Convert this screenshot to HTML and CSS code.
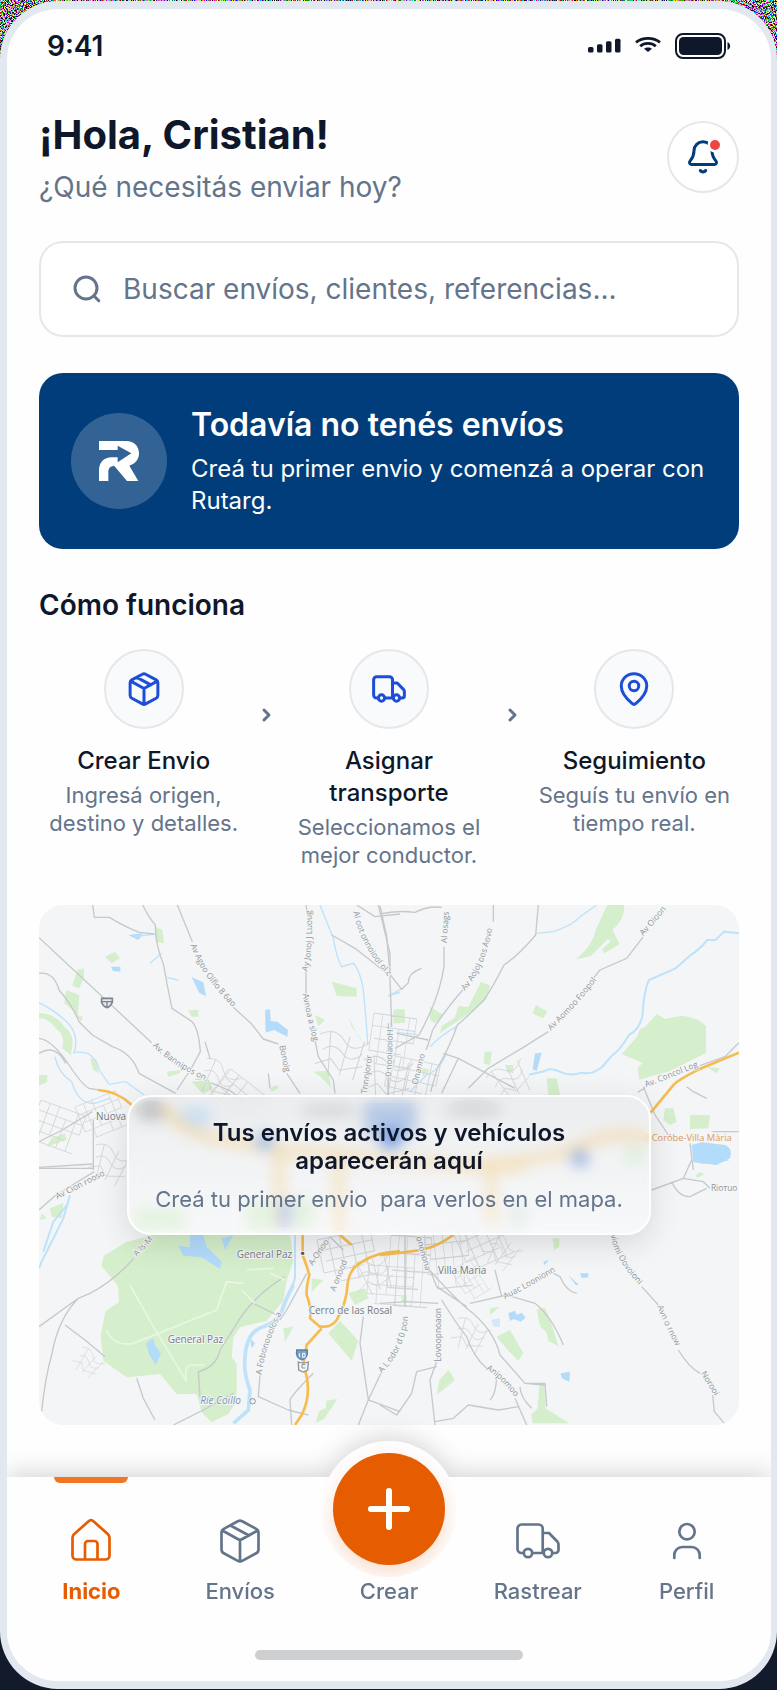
FILE: index.html
```html
<!DOCTYPE html>
<html lang="es">
<head>
<meta charset="utf-8">
<meta name="viewport" content="width=device-width, initial-scale=1">
<title>Rutarg</title>
<link rel="stylesheet" href="styles.css">
</head>
<body>
<svg class="grain" aria-hidden="true">
  <defs>
    <filter id="noise" x="0" y="0" width="100%" height="100%">
      <feTurbulence type="fractalNoise" baseFrequency="0.9" numOctaves="2" seed="4"/>
      <feColorMatrix values="5 1 1 0 -3.2  1 5 1 0 -3.2  1 1 5 0 -3.2  0 0 0 0 1"/>
    </filter>
  </defs>
  <rect width="100%" height="80" filter="url(#noise)"/>
</svg>
<svg class="defs" aria-hidden="true">
  <symbol id="i-box" viewBox="0 0 48 48">
    <path d="M21.8 4.3a4.4 4.4 0 0 1 4.4 0l14 7.6a4.4 4.4 0 0 1 2.3 3.9v16.6a4.4 4.4 0 0 1-2.3 3.9l-14 7.6a4.4 4.4 0 0 1-4.4 0l-14-7.6a4.4 4.4 0 0 1-2.3-3.9V15.8a4.4 4.4 0 0 1 2.3-3.9zM6.3 13.5 24 23.3l17.700-9.8M24 23.3v21M14.5 8.500l18.500 10"/>
  </symbol>
  <symbol id="i-truck" viewBox="0 0 48 48">
    <path d="M9.8 36H7.5a4 4 0 0 1-4-4V11.5a4 4 0 0 1 4-4h17.200a4 4 0 0 1 4 4V36M18.200 36h11.600M28.700 16H35l8.500 8.800a4 4 0 0 1 1 2.700V33a3 3 0 0 1-3 3h-3.300"/>
    <circle cx="14" cy="36" r="4.2"/><circle cx="34" cy="36" r="4.2"/>
  </symbol>
</svg>

<div class="phone">
  <header class="status">
    <span class="clock">9:41</span>
    <div class="status-icons">
      <svg width="33" height="26" viewBox="0 0 33 26" fill="currentColor" aria-label="Señal"><rect x="0" y="14" width="5.500" height="5.500" rx="1.500"/><rect x="9" y="11.300" width="5.500" height="8.200" rx="1.500"/><rect x="18" y="8.300" width="5.500" height="11.200" rx="1.500"/><rect x="27" y="5.700" width="5.500" height="13.800" rx="1.500"/></svg>
      <svg width="26" height="26" viewBox="0 0 26 26" fill="none" stroke="currentColor" stroke-width="2.800" aria-label="Wi-Fi"><path d="M1 9.300C7.500 4 18.500 4 25 9.300M5.200 13.200c4.300-3.700 11.300-3.700 15.600 0"/><path d="M9 15.800c2.300-1.800 5.700-1.800 8 0l-4 3.200z" fill="currentColor" stroke="none"/></svg>
      <svg width="56" height="26" viewBox="0 0 56 26" aria-label="Batería"><rect x="1" y="1" width="49" height="24" rx="7" fill="none" stroke="currentColor" stroke-width="2"/><rect x="4" y="4" width="43" height="18" rx="4.500" fill="currentColor"/><path d="M52.500 9c3.500 1.500 3.500 6.500 0 8z" fill="currentColor"/></svg>
    </div>
  </header>

  <main class="content">
    <section class="greeting">
      <div>
        <h1>¡Hola, Cristian!</h1>
        <p class="lead">¿Qué necesitás enviar hoy?</p>
      </div>
      <button class="bell" type="button" aria-label="Notificaciones">
        <svg width="40" height="40" viewBox="0 0 40 40" fill="none" stroke="currentColor" stroke-width="3" stroke-linecap="round" stroke-linejoin="round"><path d="M20 4.700c-5 0-9 4-9 9 0 5-1.500 7.300-4 10.500-1 1.300-.4 3.300 1.300 3.300h23.400c1.700 0 2.300-2 1.300-3.300-2.500-3.200-4-5.500-4-10.500 0-5-4-9-9-9zM17.300 33.500c1.400 1.900 4 1.900 5.400 0"/><circle cx="32" cy="8" r="7.500" fill="#fff" stroke="none"/><circle cx="32" cy="8" r="5" fill="#ef4444" stroke="none"/></svg>
      </button>
    </section>

    <label class="search">
      <svg width="32" height="32" viewBox="0 0 32 32" fill="none" stroke="currentColor" stroke-width="3" stroke-linecap="round"><circle cx="15" cy="15" r="11"/><path d="m23 23 4.800 4.800"/></svg>
      <input type="search" aria-label="Buscar" placeholder="Buscar envíos, clientes, referencias...">
    </label>

    <section class="banner">
      <span class="logo"><svg width="40" height="40" viewBox="0 0 120 120" fill="#fff"><path d="M0 0h82c23 0 38 16 38 37 0 18-11 31-29 37l27 46H84L46 75c-11 0-18 6-18 18v27H0V88c0-23 15-39 38-39h18v15l41-27-41-23v13H0z"/></svg></span>
      <div>
        <h2>Todavía no tenés envíos</h2>
        <p>Creá tu primer envio y comenzá a operar con Rutarg.</p>
      </div>
    </section>

    <h2 class="section-title">Cómo funciona</h2>
    <div class="steps">
      <article class="step">
        <span class="step-icon"><svg width="36" height="36"><use href="#i-box"/></svg></span>
        <h3>Crear Envio</h3>
        <p>Ingresá origen, destino y detalles.</p>
      </article>
      <svg class="chevron" width="20" height="20" viewBox="0 0 20 20"><path d="m8 5 5 5-5 5"/></svg>
      <article class="step">
        <span class="step-icon"><svg width="36" height="36"><use href="#i-truck"/></svg></span>
        <h3>Asignar transporte</h3>
        <p>Seleccionamos el mejor conductor.</p>
      </article>
      <svg class="chevron" width="20" height="20" viewBox="0 0 20 20"><path d="m8 5 5 5-5 5"/></svg>
      <article class="step">
        <span class="step-icon"><svg width="36" height="36" viewBox="0 0 48 48"><path d="M24 3.500c-9.500 0-17 7.300-17 16.500 0 9 7.500 17.500 14.300 23.300a4.200 4.200 0 0 0 5.400 0C33.500 37.500 41 29 41 20 41 10.800 33.500 3.500 24 3.500z"/><circle cx="24" cy="20" r="6.300"/></svg></span>
        <h3>Seguimiento</h3>
        <p>Seguís tu envío en tiempo real.</p>
      </article>
    </div>

    <section class="map">
      <svg class="map-art" viewBox="0 0 700 520" preserveAspectRatio="xMidYMid slice" aria-hidden="true">
        <defs>
          <g id="grid"><path d="M0 0h120M0 25h120M10 50h110M0 75h90M20 100h100M0 0v75M25 0v100M50 0v75M75 25v75M100 0v100M120 0v50"/></g>
          <g id="lanes"><path d="M0 10q30-20 50 5t50-5M10 40q20-20 40 0t40-5M0 70l30-15 20 20 45-15M20 0l10 90M60 5l-8 80M90 10 80 90"/></g>
          <path id="t1" d="M512 165Q545 265 660 372"/>
          <path id="t2" d="M398 468Q470 540 600 590"/>
          <path id="t3" d="M862 245Q884 160 872 50"/>
          <path id="t4" d="M1000 65Q1020 170 1110 265"/>
          <path id="t5" d="M848 312Q855 360 884 470"/>
          <path id="t6" d="M255 303Q325 220 340 90"/>
          <path id="t7" d="M512 422Q590 350 665 250"/>
          <path id="t8" d="M798 592 980 520"/>
          <path id="t9" d="M790 138 870 45"/>
          <path id="t10" d="M692 225Q705 310 810 408"/>
          <path id="t11" d="M832 440Q855 500 905 590"/>
          <path id="t12" d="M318 628Q370 660 420 730"/>
          <path id="t13" d="M725 645Q735 560 785 460"/>
          <path id="t14" d="M375 418Q450 380 540 325"/>
          <path id="t15" d="M5 640Q75 570 84 470"/>
        </defs>
        <rect width="700" height="520" fill="#f3f5f6"/>

        <!-- parks -->
        <g class="park">
          <g transform="translate(-19 -15) scale(.33333)">
            <path d="M405 110l22 10 5 40-25-5zM255 200l30-15 15 20-25 15zM172 240l20-5v30l-15 30-20-8zM138 300l40 15-5 60 15 5-5 15-25-35-25-20zM57 370q50 0 75 40 30 20 25 60l-5 25-25-20q10-40-20-60-20-30-50-30zM57 555h25v20l-25 12zM515 575l50-5 15 25-30 17zM935 275l75 20v25l-60-2zM885 375l30 15-20 18zM1120 360h20v40h-20zM985 380l30 60 25 30-45-60zM440 545l40-5v10l-35 10zM880 545l45-3 8 50-30-30zM750 595l20-10 5 10-20 10zM95 745l40-15 5 20-60 20zM505 360l30 0 0 20-20 0zM210 505l20 5 5 40-15-10z"/>
          </g>
          <g transform="translate(341 -15) scale(.33333)">
            <path d="M682 45h50q5 40-35 75l22 42-45 28-8-12 27-25-10-5-50 50-45 10q50-40 60-90zM830 372l25 15 50-10q50 5 73 32v80l-110 55-90 25-5-35 15-15-63-27 45-50 10-25 15-5zM303 275l27 12-10 40-55 45-60 40-25 18 5-22 40-25 10-35 30 3zM468 345l35 20-15 20-30-15zM45 358h30v40h-30zM150 350l40 25-25 25-15-10zM500 565h30l10 50h-35zM315 485l20 0-5 40-20-5zM380 525l20 0 0 25-20-3zM855 655h25l10 40-20 10-20-15zM930 675l60 0-5 40-55 2zM980 530l40 5-10 15zM120 530l30 10-20 20z"/>
          </g>
          <g transform="translate(-19 255) scale(.33333)">
            <path d="M410 222h400l10 80-20 60-10 60-50 60-80 20-20 30-5 60 15 20v110l-25 40-50 25-30-30-15-55-60 0-50-60-100 10-70-50-8-75 15-75 40-25-3-50-50-60 8-30 65-40zM65 160l15 15-20 5zM90 145l40-15-5 45-30-5zM875 355l35 5-35 35zM985 400l50-15 10 30-40 20zM960 482l55 60-20 60-70-82zM790 505l30-5-25 45zM920 722l32-5-40 60-25 12 10-35 20-10z"/>
          </g>
          <g transform="translate(341 255) scale(.33333)">
            <path d="M518 235h20v25l-15 10zM470 448l25-5 20 50 20 65-30-15-5-25-20-20zM350 530l40-20 40 70-15 22-30-30-30-35zM205 630l20 30-55 45 8-45zM478 675l15 0 3 70 72 45h-110l-5-25 20-20zM960 35l12 8-20 12-5-8zM330 445l30-5-30 25zM65 405h15v20h-15z"/>
          </g>
        </g>

        <!-- water -->
        <g class="water">
          <g transform="translate(-19 -15) scale(.33333)">
            <path d="M273 230h28v15l-22-2zM515 262l35 15 8 42-20-10zM735 360l15-2 2 35 20 2 32 25-2 20-40-20-25 8zM325 135l45-5-15 20z"/>
            <g class="line"><path d="M57 338q60 30 95 70 25 40 10 80 60-10 75 50l30 45 50-8 55 40M105 500q10 50 50 75 20 70 70 65l45-15M390 220l35-30M345 140l60-8M440 262l35 8M900 45l40 100q10 60 25 85l35-10q20 20 30 80 10 100 13 165M1105 318l35-12"/></g>
          </g>
          <g transform="translate(341 -15) scale(.33333)">
            <path d="M465 490l20-2-15 55-12-5zM935 765l30-8 70 8q25 10 15 40l-40 20-70-8z"/>
            <g class="line wide"><path d="M1077 130l-45-5-25 25h-25q-25 30-50 45l-45 40-80 35q-15 30-20 110-10 40-40 55-30 50-50 60l-30 35q-30 25-60 18-40 12-65-2-30-15-50-2l-45 10"/></g>
            <g class="line"><path d="M470 130l50-5q60-20 80-45l50-35M50 428l60 5M200 490q-20 50-60 65l-50 50M25 318l40-22M230 410q-40 20-80 60"/></g>
          </g>
          <g transform="translate(-19 255) scale(.33333)">
            <path d="M510 225h40l10 35 45 45-5 22-55-35-55-5-15-30 35 5zM605 235l35-10-25 45zM378 550l20-15 10 25 15 20-15 35-20-30zM690 535l15 15-10 15z"/>
            <g class="line river"><path d="M820 375q-25 45-40 95-20 20-50 30-50 15-55 90-5 50 15 100l-5 60-45 40"/></g>
            <g class="line wide"><path d="M825 225v130l-10 30M150 105l-20 70-30 60-35 70-8 20M145 130l-45 55-30 90"/></g>
          </g>
          <g transform="translate(341 255) scale(.33333)">
            <path d="M940 0h110l-40 8-45 3zM565 345l32 30-10 0zM600 340h25v12l-20 2zM542 640l28-5-2 30-22-10zM385 460l20-8 5 12 15-6 12 15-15 12-20-8-12 6zM490 305l18-5-15 15z"/>
            <path d="M335 480l25-5 0 25-20 0z" opacity=".5"/>
          </g>
        </g>

        <!-- small streets -->
        <g class="street">
          <use href="#grid" transform="translate(2 195) rotate(20) scale(.4)"/>
          <use href="#grid" transform="translate(36 202) rotate(-22) scale(.36)"/>
          <use href="#lanes" transform="translate(58 236) rotate(20) scale(.4)"/>
          <use href="#grid" transform="translate(192 164) rotate(38) scale(.42)"/>
          <use href="#lanes" transform="translate(170 150) rotate(30) scale(.4)"/>
          <use href="#lanes" transform="translate(282 124) rotate(10) scale(.5)"/>
          <use href="#grid" transform="translate(335 108) rotate(8) scale(.36 .5)"/>
          <use href="#grid" transform="translate(352 150) rotate(12) scale(.42)"/>
          <use href="#lanes" transform="translate(325 150) rotate(4) scale(.5)"/>
          <use href="#lanes" transform="translate(445 170) rotate(-30) scale(.4)"/>
          <use href="#grid" transform="translate(278 335) rotate(-12) scale(.45)"/>
          <use href="#grid" transform="translate(352 330) rotate(4) scale(.34 .7)"/>
          <use href="#grid" transform="translate(385 325) rotate(-6) scale(.35 .6)"/>
          <use href="#grid" transform="translate(330 360) rotate(4) scale(.38)"/>
          <use href="#grid" transform="translate(415 330) rotate(-24) scale(.4)"/>
          <use href="#grid" transform="translate(412 366) rotate(-32) scale(.22 .36)"/>
          <use href="#lanes" transform="translate(455 325) rotate(30) scale(.35)"/>
          <use href="#lanes" transform="translate(420 410) rotate(20) scale(.35)"/>
          <use href="#lanes" transform="translate(45 440) rotate(36) scale(.28)"/>
          <use href="#lanes" transform="translate(310 360) rotate(-20) scale(.4)"/>
        </g>

        <!-- roads -->
        <g class="road">
          <g transform="translate(-19 -15) scale(.33333)"><path d="M57 143 395 458M572 578l60 25 40 30M57 250q45-5 60 50 40 45 60 95l40 40 60 35q60 20 80 80l110 60M57 445q40 5 90 80 40 60 60 70l30 5M57 490q50-30 80 30M218 45l5 37 45 0q50 30 90 45l45 5M368 45q20 40 38 60 0 60 25 120 10 60 25 130l60 40q20 20 25 90l-30 55-40 60M472 45l45 110M640 352l55 50 35 45 45 15M800 550l40 60M858 45l5 30M858 240v70M885 450l10 50 45 70 5 40M1010 45l55 35 75-8M1075 45l35 145v75M935 135l70 40 95 75M1110 265l5 145M1105 570v50M555 455l15 50M57 755l70-35 90-55M220 690v150M57 832l160-10M745 550l5 45"/></g>
          <g transform="translate(341 -15) scale(.33333)"><path d="M0 72q50-12 105-5 40-20 80-15M0 48l20 90 10 115 35 45 20-20q0-30 40-43M192 170v60q-10 60-30 110-20 50-45 95L45 475M340 45v50M248 300q-60 70-90 120-15 50-20 60M475 45l-8 90q-50 60-95 90-30 60-60 105-50 50-80 75-20 60-60 130l-20 70M790 140l-50 65-80 35-28 35M505 425l-80 50-100 60-60 60M960 527l75-27 42-42M798 592l-25 15M790 590l35 85 40 60M190 490l45 15 170 90M235 505l-50 105M25 400v220M50 430l95 20M920 590l20 15 40 20M1077 725l-80 0M930 760l10 80"/></g>
          <g transform="translate(-19 255) scale(.33333)"><path d="M57 25h165M108 105l115-70M342 295Q260 385 175 415L57 500M175 415q-60 60-80 170-20 70-30 170M108 105l-51 45M135 495l60 45 60 50M795 350q-100 60-150 150l-45 70q-10 50-65 65l5 75M640 700l-90 50-90 45M860 340l-60 110-20 30M720 645l-5 65 90 40 60 15M1030 470l-10 80 25 170-30 75M1085 635l-40 85 95 35M350 655l20 60 35 65M880 640q-60 60-70 80l5 75M930 230l40 40M700 430l70 35"/></g>
          <g transform="translate(341 255) scale(.33333)"><path d="M140 320q60 70 120 125 80 60 100 140l75 85 60 5M150 330l20 50 90 60M185 420q50 80 75 110 20 60 60 95M405 715l35 80M175 590l-25 70 15 135M0 735l50 30 45-65 15-65 60-15M165 785l55-10 45-40 90 15 60-10M420 680q0 30 35 65M435 670l60 0 5 70M75 440v-210M0 430l80-5 95 5M270 430l110-25 85 25q50 40 85 125M345 330l20 80M510 335l30 15q20 45 50 50M785 380l50 55M895 570q30 50 65 70M998 705l5 50 30 35M815 90l95-35 60 10 20 20M910 55l25-55M875 65q20 45 55 45l50-25M350 640q0 60-20 80"/></g>
        </g>
        <g class="trail" transform="translate(-19 255) scale(.33333)"><path d="M330 375 400 500 500 665M260 510q20 50 80 40l250-100 30-85 50 5M680 330l80-5M665 390l40 40M500 665q-10-40 10-50l45 0M750 340l45 20"/></g>

        <!-- highways -->
        <g class="highway">
          <g transform="translate(-19 -15) scale(.33333)"><path d="M235 600q60 5 100 45"/></g>
          <g transform="translate(341 -15) scale(.33333)"><path d="M1077 488l-120 50q-60 30-75 45l-70 85"/></g>
          <g transform="translate(-19 255) scale(.33333)"><path d="M848 225v60q15 40 20 60-10 40-8 60 15 40 10 70l30 25h15q20 0 35-20 30-50 33-110 5-40 35-60 50-35 122-36M905 505l-45 50-10 60q30 80-5 150l-20 30M960 225l35 30"/></g>
          <g transform="translate(341 255) scale(.33333)"><path d="M0 285q110-10 140-20 30-5 80-40"/></g>
        </g>

        <!-- city centre, seen through the glass card -->
        <g>
          <ellipse cx="113" cy="206" rx="16" ry="10" fill="#a3a6a8"/>
          <rect x="140" y="202" width="32" height="20" rx="8" fill="#b5d8fa"/>
          <rect x="325" y="198" width="52" height="34" fill="#8fb0e2"/>
          <ellipse cx="435" cy="205" rx="30" ry="10" fill="#cfd1d3"/>
          <ellipse cx="290" cy="206" rx="30" ry="8" fill="#cfd1d3"/>
          <g class="boulevard"><path d="M126 200q10 26 54 34l66 12 80 6 90 8q70 0 120-16 40-22 74-10M240 244v78M300 246v80M452 258l0 60M425 262h60"/></g>
          <circle cx="352" cy="233" r="11" fill="#0b52e0"/>
          <circle cx="226" cy="236" r="9" fill="#5c92e0"/>
          <circle cx="541" cy="254" r="9" fill="#4f7fd6"/>
          <circle cx="595" cy="250" r="9" fill="#c9ecbb"/>
          <rect x="240" y="296" width="12" height="26" fill="#6f8dd0"/>
          <rect x="96" y="304" width="50" height="20" fill="#c6ebb8"/>
          <rect x="208" y="298" width="28" height="26" fill="#c6ebb8"/>
          <rect x="254" y="294" width="20" height="28" fill="#c6ebb8"/>
          <rect x="470" y="300" width="18" height="22" fill="#cfe3d2"/>
        </g>

        <!-- place and street names -->
        <g class="names">
          <g transform="translate(-19 -15) scale(.33333)">
            <text><textPath href="#t1">Av Agoo Olfio 8 6ao</textPath></text>
            <text><textPath href="#t2">Av. Bannipos on.</textPath></text>
            <text><textPath href="#t3">Ay Jonoj J Luoug</textPath></text>
            <text><textPath href="#t4">Al oot onnoiool ol c</textPath></text>
            <text><textPath href="#t5">Avnoa a slog</textPath></text>
            <text transform="translate(778 468) rotate(78)">Bonolg</text>
            <text transform="translate(1114 560) rotate(-88)">0 nooiaoioH</text>
            <text transform="translate(1040 612) rotate(-82)">Tnnnjoror</text>
            <text class="place" x="228" y="689">Nuova</text>
          </g>
          <g transform="translate(341 -15) scale(.33333)">
            <text transform="translate(200 160) rotate(-86)">Al osags</text>
            <text><textPath href="#t6">Av Aojoj oos Aovo</textPath></text>
            <text><textPath href="#t7">Av Aomoo Foopol</textPath></text>
            <text><textPath href="#t8">Av. Concol Log</textPath></text>
            <text><textPath href="#t9">Av Oioon</textPath></text>
            <text transform="translate(112 585) rotate(-76)">Onanno</text>
            <text class="toll" x="815" y="752">Coróbe-Villa Mària</text>
          </g>
          <g transform="translate(-19 255) scale(.33333)">
            <text transform="translate(112 118) rotate(-27)">Av Cion rooso</text>
            <text transform="translate(350 290) rotate(-46)">A ls-M</text>
            <text transform="translate(878 318) rotate(-56)">A-Onoo</text>
            <text transform="translate(945 395) rotate(-68)">A onood</text>
            <text><textPath href="#t13">A Fobonooolos a</textPath></text>
            <text class="place" x="650" y="294">General Paz</text>
            <text class="place" x="866" y="461">Cerro de las Rosal</text>
            <text class="place" x="443" y="550">General Paz</text>
            <text class="place stream" x="541" y="732">Ríe Coillo</text>
            <circle cx="848" cy="280" r="5" fill="#4b5563"/>
            <circle cx="698" cy="724" r="7" fill="#eef1f3" stroke="#7b828a" stroke-width="4"/>
          </g>
          <g transform="translate(341 255) scale(.33333)">
            <text transform="translate(108 232) rotate(74)">ononona</text>
            <text transform="translate(182 605) rotate(-90)">Lovoopnoaon</text>
            <text><textPath href="#t15">A L odor d 0 pon</textPath></text>
            <text><textPath href="#t10">viomi Oovoioni</textPath></text>
            <text><textPath href="#t11">Avn o rnow</textPath></text>
            <text><textPath href="#t12">Anipomoo</textPath></text>
            <text><textPath href="#t14">Auac Loonionn</textPath></text>
            <text transform="translate(962 640) rotate(58)">Norooi</text>
            <text x="993" y="93">Rioтuo</text>
            <text class="place" x="174" y="343">Villa Maria</text>
          </g>
        </g>

        <!-- route shields -->
        <g transform="translate(-19 -15) scale(.33333)"><path d="M245 325h32q3 20-16 28-20-8-16-28z" fill="#e5e8ea" stroke="#7d858e" stroke-width="5"/><path d="M245 335h32M261 335v16" stroke="#7d858e" stroke-width="4"/></g>
        <g transform="translate(-19 255) scale(.33333)"><path d="M830 570h32q3 22-16 30-20-8-16-30z" fill="#7ba0c4" stroke="#5b80a6" stroke-width="4"/><path d="M838 580v12M848 580v12h7v-12z" stroke="#fff" stroke-width="3" fill="none"/><path d="M835 606q15 6 30 0l-2 24-13 6-14-6z" fill="#f3f5f6" stroke="#8b939b" stroke-width="4"/><path d="M856 614h-10v10h10" stroke="#8b939b" stroke-width="3" fill="none"/></g>
      </svg>
      <div class="map-note">
        <h3>Tus envíos activos y vehículos aparecerán aquí</h3>
        <p>Creá tu primer envio&nbsp; para verlos en el mapa.</p>
      </div>
    </section>
  </main>

  <footer class="dock">
    <nav class="tabs" aria-label="Principal">
      <a class="tab active" href="#inicio" aria-current="page">
        <svg width="48" height="48" viewBox="0 0 48 48"><path d="M5.500 20.500c0-1.300.6-2.400 1.500-3.300L21.300 4.400a4 4 0 0 1 5.400 0L41 17.200c.9.900 1.500 2 1.500 3.300v18a4 4 0 0 1-4 4h-29a4 4 0 0 1-4-4zM18 42.500V27a3 3 0 0 1 3-3h6.500a3 3 0 0 1 3 3v15.500"/></svg>
        <span>Inicio</span>
      </a>
      <a class="tab" href="#envios">
        <svg width="48" height="48"><use href="#i-box"/></svg>
        <span>Envíos</span>
      </a>
      <a class="tab create" href="#crear">
        <i class="fab"><svg width="48" height="48" viewBox="0 0 48 48"><path d="M24 6v36M6 24h36"/></svg></i>
        <span>Crear</span>
      </a>
      <a class="tab" href="#rastrear">
        <svg width="48" height="48"><use href="#i-truck"/></svg>
        <span>Rastrear</span>
      </a>
      <a class="tab" href="#perfil">
        <svg width="48" height="48" viewBox="0 0 48 48"><circle cx="24" cy="14.700" r="7.700"/><path d="M11.300 41v-3a8 8 0 0 1 8-8h9.400a8 8 0 0 1 8 8v3"/></svg>
        <span>Perfil</span>
      </a>
    </nav>
    <div class="home-bar"></div>
  </footer>
</div>
</body>
</html>
```
FILE: styles.css
```css
:root {
  --ink: #0f172a;
  --muted: #64748b;
  --line: #e5e7eb;
  --navy: #003d7a;
  --blue: #1d4ed8;
  --orange: #e65c00;
}

* { box-sizing: border-box; }

body {
  margin: 0;
  padding: 1px 0;
  position: relative;
  background: #131a2b;
  color: var(--ink);
  font-family: Inter, "Liberation Sans", sans-serif;
}

h1, h2, h3, p { margin: 0; }

.grain {
  position: absolute;
  top: 0;
  left: 0;
  width: 100%;
  height: 80px;
}

.defs { position: absolute; width: 0; height: 0; }

.phone {
  position: relative;
  overflow: hidden;
  background: #fefefe;
  border: solid #e2e8f0;
  border-width: 8px 6px 8px 7px;
  border-radius: 58px;
}

.status {
  display: flex;
  justify-content: space-between;
  align-items: flex-start;
  min-height: 100px;
  padding: 16px 40px 0;
}

.clock { font-size: 28px; line-height: 42px; font-weight: 600; }

.status-icons { display: flex; align-items: center; gap: 14px; height: 42px; }

.content {
  display: flex;
  flex-direction: column;
  gap: 36px;
  padding: 0 32px 52px;
}

.greeting { display: flex; justify-content: space-between; align-items: center; }

h1 { font-size: 40px; line-height: 52px; font-weight: 700; }

.lead { margin-top: 8px; font-size: 28px; line-height: 36px; color: var(--muted); }

.bell {
  display: grid;
  place-items: center;
  width: 72px;
  height: 72px;
  padding: 0;
  border: 2px solid var(--line);
  border-radius: 50%;
  background: #fff;
  color: var(--navy);
}

.search {
  display: flex;
  align-items: center;
  gap: 20px;
  height: 96px;
  padding: 0 30px;
  border: 2px solid var(--line);
  border-radius: 24px;
  background: #fff;
  color: var(--muted);
}

.search input {
  flex: 1;
  min-width: 0;
  padding: 0;
  border: 0;
  outline: 0;
  background: none;
  font: 400 28px/40px Inter, "Liberation Sans", sans-serif;
  color: var(--ink);
}

.search input::placeholder { color: var(--muted); opacity: 1; }

.banner {
  display: flex;
  align-items: center;
  gap: 24px;
  padding: 32px;
  border-radius: 24px;
  background: var(--navy);
  color: #fff;
}

.logo {
  display: grid;
  place-items: center;
  flex: none;
  width: 96px;
  height: 96px;
  border-radius: 50%;
  background: rgba(255, 255, 255, .2);
}

.banner h2 { font-size: 32px; line-height: 40px; font-weight: 600; }

.banner p { margin-top: 8px; font-size: 24px; line-height: 32px; }

.section-title { margin-bottom: -12px; font-size: 28px; line-height: 40px; font-weight: 600; }

.steps { display: grid; grid-template-columns: 1fr 36px 1fr 36px 1fr; }

.step { display: flex; flex-direction: column; align-items: center; text-align: center; }

.step-icon {
  display: grid;
  place-items: center;
  width: 80px;
  height: 80px;
  border: 2px solid var(--line);
  border-radius: 50%;
  background: #f8fafc;
}

.step-icon svg {
  fill: none;
  stroke: var(--blue);
  stroke-width: 4;
  stroke-linecap: round;
  stroke-linejoin: round;
}

.step h3 { margin-top: 16px; font-size: 24px; line-height: 32px; font-weight: 500; }

.step p { margin-top: 4px; font-size: 22px; line-height: 28px; color: var(--muted); }

.chevron {
  justify-self: center;
  margin-top: 56px;
  fill: none;
  stroke: var(--muted);
  stroke-width: 3;
  stroke-linecap: round;
  stroke-linejoin: round;
}

.map {
  display: grid;
  place-items: center;
  height: 520px;
  overflow: hidden;
  border-radius: 24px;
}

.map-art, .map-note { grid-area: 1 / 1; }

.map-art { display: block; width: 100%; height: 520px; font-family: "Open Sans", "Noto Sans", sans-serif; }

.park { fill: #d5eecb; }
.water { fill: #b3dcfb; }
.line { fill: none; stroke: #bfe2fb; stroke-width: 4; }
.line.wide { stroke-width: 6; }
.line.river { stroke-width: 11; }
.street { fill: none; stroke: #d2d5d8; stroke-width: 2; }
.road { fill: none; stroke: #c6c9cc; stroke-width: 4; stroke-linejoin: round; }
.trail { fill: none; stroke: #eaf6e4; stroke-width: 5; }
.highway { fill: none; stroke: #f6bd4e; stroke-width: 8; stroke-linejoin: round; }
.boulevard { fill: none; stroke: #f8cd7c; stroke-width: 9; }

.names { font-size: 25px; fill: #8f959b; stroke: #f3f5f6; stroke-width: 6; paint-order: stroke; }
.names .place { font-size: 30px; fill: #747b83; }
.names .stream { fill: #7795b5; font-style: italic; }
.names .toll { font-size: 28px; fill: #dd9a5c; }

.map-note {
  width: calc(100% - 176px);
  padding: 22px 24px 18px;
  border: 2px solid rgba(255, 255, 255, .9);
  border-radius: 24px;
  background: linear-gradient(rgba(226, 228, 230, .42), rgba(250, 250, 252, .62));
  backdrop-filter: blur(7px);
  box-shadow: 0 8px 32px rgba(0, 0, 0, .12);
  text-align: center;
}

.map-note h3 { font-size: 24px; line-height: 28px; font-weight: 600; }

.map-note p { margin-top: 8px; font-size: 22px; line-height: 32px; color: var(--muted); }

.dock {
  position: relative;
  padding-bottom: 21px;
  background: #fefefe;
  filter: drop-shadow(0 -4px 12px rgba(0, 0, 0, .16));
}

.tabs { display: grid; grid-template-columns: repeat(5, 1fr); padding: 0 10px; }

.tab {
  position: relative;
  display: flex;
  flex-direction: column;
  align-items: center;
  justify-content: flex-end;
  gap: 12px;
  padding-top: 40px;
  font-size: 22px;
  line-height: 28px;
  font-weight: 500;
  color: var(--muted);
  text-decoration: none;
}

.tab svg {
  fill: none;
  stroke: currentColor;
  stroke-width: 2.7;
  stroke-linecap: round;
  stroke-linejoin: round;
}

.tab span { position: relative; z-index: 1; }

.tab.active { color: var(--orange); font-weight: 700; }

.tab.active::before {
  content: "";
  position: absolute;
  top: 0;
  width: 74px;
  height: 6px;
  border-radius: 0 0 6px 6px;
  background: #f47521;
}

.fab {
  position: absolute;
  bottom: 28px;
  display: grid;
  place-items: center;
  width: 136px;
  height: 136px;
  overflow: hidden;
  border-radius: 50%;
  background: #fefefe;
  color: #fff;
}

.fab::before {
  content: "";
  grid-area: 1 / 1;
  width: 112px;
  height: 112px;
  border-radius: 50%;
  background: var(--orange);
  box-shadow: 0 8px 20px rgba(230, 92, 0, .2);
}

.fab svg { grid-area: 1 / 1; z-index: 1; stroke-width: 6; }

.home-bar {
  width: 268px;
  height: 10px;
  margin: 45px auto 0;
  border-radius: 5px;
  background: #cdcfd1;
}
```
